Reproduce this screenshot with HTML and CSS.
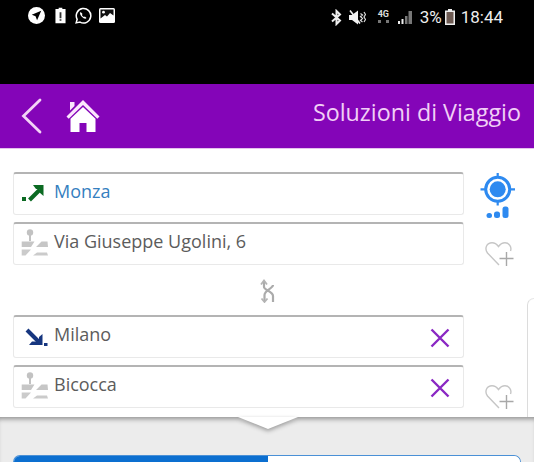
FILE: index.html
```html
<!DOCTYPE html>
<html lang="it">
<head>
<meta charset="utf-8">
<title>Soluzioni di Viaggio</title>
<link rel="stylesheet" href="styles.css">
</head>
<body>
<div class="status">
  <div class="status-left">
    <svg class="ic-nav" width="17" height="17" viewBox="0 0 18 18"><circle cx="9" cy="9" r="9" fill="#fff"/><path d="M14 4 4 8.200l4 1.600 1.600 4.200z" fill="#000"/></svg>
    <svg width="11" height="17" viewBox="0 0 12 18"><path d="M4 .5h4v1.500h3.500v15.500H.5V2H4z" fill="#fff"/><path d="M5 5.500h2v6.500H5zM5 13h2v1.800H5z" fill="#333"/></svg>
    <svg width="17" height="17" viewBox="0 0 18 18"><path d="M1.200 16.800 2.300 13A7.700 7.700 0 1 1 5.300 16z" fill="none" stroke="#fff" stroke-width="1.600"/><path d="M6 5.300c-1.200 1-.8 3 1.200 5s4 2.600 5 1.400l-1.700-1.700-1 .7C8.500 10.300 7.700 9.500 7.300 8.500l.7-1z" fill="#fff"/></svg>
    <svg class="ic-pic" width="16" height="15" viewBox="0 0 16 15"><rect width="16" height="15" rx="1.500" fill="#fff"/><path d="M1.500 1.500h13v6L11 5 8 8.500 6 7l-4.500 3.500z" fill="#111"/><circle cx="4.500" cy="4.200" r="1.400" fill="#fff"/></svg>
  </div>
  <div class="status-right">
    <svg class="bt" width="11" height="17" viewBox="0 0 11 17"><path d="M1 4.500 9 11.500 5.500 15V2L9 5.500 1 12.500" fill="none" stroke="#eee" stroke-width="2"/></svg>
    <svg class="mute" width="17" height="15" viewBox="0 0 17 15"><path d="M0 5h3l6-4.500v14L3 10H0z" fill="#f2f2f2"/><path d="M1 .5l10 13" stroke="#f2f2f2" stroke-width="1.600"/><path d="M11.500 3.500l2 1.500-2 1.500 2 2-2 2 2 1.500M15 2l1.500 2.500L15 7l1.500 2.500L15 12" fill="none" stroke="#ddd" stroke-width="1.200"/></svg>
    <span class="net">4G<i class="net-dots"></i></span>
    <svg class="sig" width="14" height="14" viewBox="0 0 14 14"><path d="M0 11h2v3H0zM3.500 9h2v5h-2z" fill="#eee"/><path d="M7 6h2.500v8H7zM10.500 1H14v13h-3.500z" fill="#777"/></svg>
    <span class="pct">3%</span>
    <svg class="bat" width="10" height="16" viewBox="0 0 10 16"><path d="M3 0h4v1.500h3V16H0V1.500h3z" fill="#eee"/><rect x="1.500" y="3" width="7" height="11.500" fill="#6d5a52"/></svg>
    <span class="clock">18:44</span>
  </div>
</div>
<header class="bar">
  <div class="bar-left">
    <svg width="21" height="36" viewBox="0 0 21 36"><path d="M19 2 2.500 18 19 34" fill="none" stroke="#f3d4f6" stroke-width="2.800" stroke-linecap="round"/></svg>
    <svg class="home" width="34" height="34" viewBox="0 0 34 34"><path d="M.5 17.500 17 1l16.500 16.500-2.200 2.200L17 6 2.700 19.700z" fill="#fbe6fd"/><path d="M4 3h4.500v4L4 11.500z" fill="#fbe6fd"/><path d="M17 8 29.500 19.800V33h-9v-9h-7v9h-9V19.800z" fill="#fff"/></svg>
  </div>
  <h1 class="title">Soluzioni di Viaggio</h1>
</header>
<main class="panel">
  <div class="form-row">
    <div class="field"><svg class="lead" width="27" height="27" viewBox="0 0 27 27"><rect x="1" y="18" width="4" height="4" fill="#0b6a22"/><path d="M8.500 21 19 10.500" stroke="#0b6a22" stroke-width="4"/><path d="M12 6h10.500v11l-4-3.500V10H15z" fill="#0b6a22"/></svg><span class="blue">Monza</span></div>
    <svg class="gps" width="36" height="46" viewBox="0 0 36 46"><circle cx="17.700" cy="17.300" r="12" fill="none" stroke="#2e8af0" stroke-width="3"/><circle cx="17.700" cy="17.300" r="8" fill="#2e8af0"/><path d="M17.700 1v5M17.700 28.500v5M.5 17.300h5.500M29.500 17.300h5.500" stroke="#2e8af0" stroke-width="2.200"/><rect x="6.500" y="41" width="5.500" height="5" rx="2.500" fill="#2e8af0"/><rect x="14" y="39.500" width="6" height="6.500" rx="2.500" fill="#2e8af0"/><rect x="22.500" y="34.500" width="6" height="11.500" rx="2.500" fill="#2e8af0"/></svg>
  </div>
  <div class="form-row">
    <div class="field"><svg class="lead" width="27" height="27" viewBox="0 0 27 27"><use href="#place"/></svg><span>Via Giuseppe Ugolini, 6</span></div>
    <svg class="fav" width="29" height="25" viewBox="0 0 29 25"><use href="#heart"/></svg>
  </div>
  <div class="swap-row">
    <svg width="16" height="24" viewBox="0 0 16 24"><path d="M4 3v5c0 3 9 4.500 9 9v6M13 6c0 3.500-8.500 5-8.500 10v6" fill="none" stroke="#ababab" stroke-width="2.200"/><path d="M1 5.500 4 1.500 7 5.500M1.500 19.500l3 3.500 3-3.500" fill="none" stroke="#b4b4b4" stroke-width="1.800"/></svg>
  </div>
  <div class="form-row">
    <div class="field"><svg class="lead" width="27" height="27" viewBox="0 0 27 27"><path d="M6 8 19 21" stroke="#16367f" stroke-width="4"/><path d="M8 23h13.500V12L18 15v4.500h-7z" fill="#16367f"/><rect x="23" y="21" width="3.500" height="3" fill="#16367f"/></svg><span>Milano</span><svg class="close" width="20" height="20" viewBox="0 0 20 20"><use href="#cross"/></svg></div>
  </div>
  <div class="form-row last">
    <div class="field"><svg class="lead" width="27" height="27" viewBox="0 0 27 27"><use href="#place"/></svg><span>Bicocca</span><svg class="close" width="20" height="20" viewBox="0 0 20 20"><use href="#cross"/></svg></div>
    <svg class="fav" width="29" height="25" viewBox="0 0 29 25"><use href="#heart"/></svg>
  </div>
  <div class="side-card"></div>
</main>
<div class="lower">
  <div class="pointer"></div>
  <div class="tabs"><div class="tab-on"></div><div class="tab-off"></div></div>
</div>
<svg class="defs" width="0" height="0">
  <defs>
    <g id="place"><circle cx="9" cy="3.500" r="3.200" fill="#c2c2c2"/><path d="M9 4v8" stroke="#c2c2c2" stroke-width="2"/><path d="M.7 12.500h8.300l4.500 0-3.500 5.500H.7zM15 18l5.500-5.500h6L27 18z" fill="#c6c6c6"/><path d="M.7 20.500H10l-5.500 6H.7zM12 26.500l4-3H26l1 3z" fill="#cbcbcb"/></g>
    <g id="heart"><path d="M14 23 2.500 11C-1 6 2 .8 7 .8c3 0 5 1.700 6.500 3.700C15 2.500 17.500 .8 20 .8c4 0 7 4.200 5.500 8.200" fill="none" stroke="#c6c6c6" stroke-width="1.400"/><path d="M21.500 10v14M14.500 16.500h14" stroke="#a8a8a8" stroke-width="1.400"/></g>
    <g id="cross"><path d="M1.500 1.500l17 17M18.500 1.500l-17 17" stroke="#8a27c3" stroke-width="2.400"/></g>
  </defs>
</svg>
</body>
</html>
```
FILE: styles.css
```css
* { box-sizing: border-box; }
html, body { margin: 0; padding: 0; }
body {
  width: 534px;
  height: 462px;
  overflow: hidden;
  background: #ececec;
  font-family: "Open Sans", "Noto Sans", sans-serif;
  color: #5c5c5c;
}
.status {
  height: 84px;
  background: #000;
  display: flex;
  justify-content: space-between;
  align-items: flex-start;
  padding: 7px 31px 0 28px;
}
.status-left { display: flex; align-items: center; gap: 9px; }
.ic-nav { margin-right: 1px; }
.ic-pic { margin-left: -2px; }
.status-right { display: flex; align-items: center; gap: 3px; color: #eee; font-family: Roboto, sans-serif; font-size: 17px; line-height: 18px; margin-top: 1px; }
.bt { margin-right: 1px; }
.mute { margin-left: 3px; }
.net { width: 17px; margin-left: 9px; font-size: 9px; line-height: 9px; height: 15px; font-weight: 700; color: #ddd; }
.net-dots { display: block; width: 11px; height: 3px; margin-top: 1px; border-left: 3px dotted #777; border-right: 3px dotted #777; }
.pct { margin-left: 5px; }
.clock { margin-left: 3px; }
.bar {
  height: 65px;
  background: #8405b8;
  display: flex;
  justify-content: space-between;
  align-items: center;
  padding: 0 13px 0 21px;
  border-bottom: 1px solid #e3c2ec;
}
.bar-left { display: flex; align-items: center; gap: 24px; }
.title {
  margin: 0 0 9px;
  font-size: 23.3px;
  font-weight: 400;
  color: #f1cff6;
  line-height: 30px;
}
.panel {
  position: relative;
  height: 268px;
  background: #fff;
  padding: 23px 0 0 13px;
}
.form-row { display: flex; align-items: flex-start; height: 43px; margin-bottom: 7px; }
.form-row.last { margin-bottom: 0; }
.field {
  width: 451px;
  height: 43px;
  flex: none;
  display: flex;
  align-items: center;
  background: #fff;
  border: 1px solid #e9e9e9;
  border-top: 2px solid #b4b4b4;
  border-radius: 3px;
  padding: 0 13px 3px 7px;
  font-size: 18px;
}
.lead { flex: none; margin-right: 6px; }
.field span { flex: 1; margin-bottom: 4px; }
.blue { color: #3580bf; }
.gps { flex: none; margin-left: 16px; }
.fav { flex: none; margin: 20px 0 0 21px; }
.swap-row { height: 43px; padding: 7px 0 0 247px; }
.close { flex: none; margin-top: 4px; }
.side-card {
  position: absolute;
  right: 0;
  top: 149px;
  width: 7px;
  height: 119px;
  border-left: 1px solid #dcdcdc;
  border-top: 1px solid #e6e6e6;
  border-top-left-radius: 8px;
}
.lower { position: relative; height: 45px; background: #ececec; padding: 38px 13px 0; box-shadow: inset 0 5px 5px -3px #8f8f8f; }
.pointer {
  position: absolute;
  left: 238px;
  top: 0;
  width: 60px;
  height: 14px;
  filter: drop-shadow(0 2px 2px #9a9a9a);
}
.pointer::before {
  content: "";
  display: block;
  height: 12px;
  background: #fff;
  clip-path: polygon(0 0, 100% 0, 50% 100%);
}
.tabs { display: flex; height: 7px; width: 508px; border-radius: 8px 8px 0 0; overflow: hidden; border: 1px solid #4a90d6; border-bottom: 0; }
.tab-on { width: 254px; background: #0c6fd0; }
.tab-off { flex: 1; background: #fff; }
.defs { position: absolute; }
```
